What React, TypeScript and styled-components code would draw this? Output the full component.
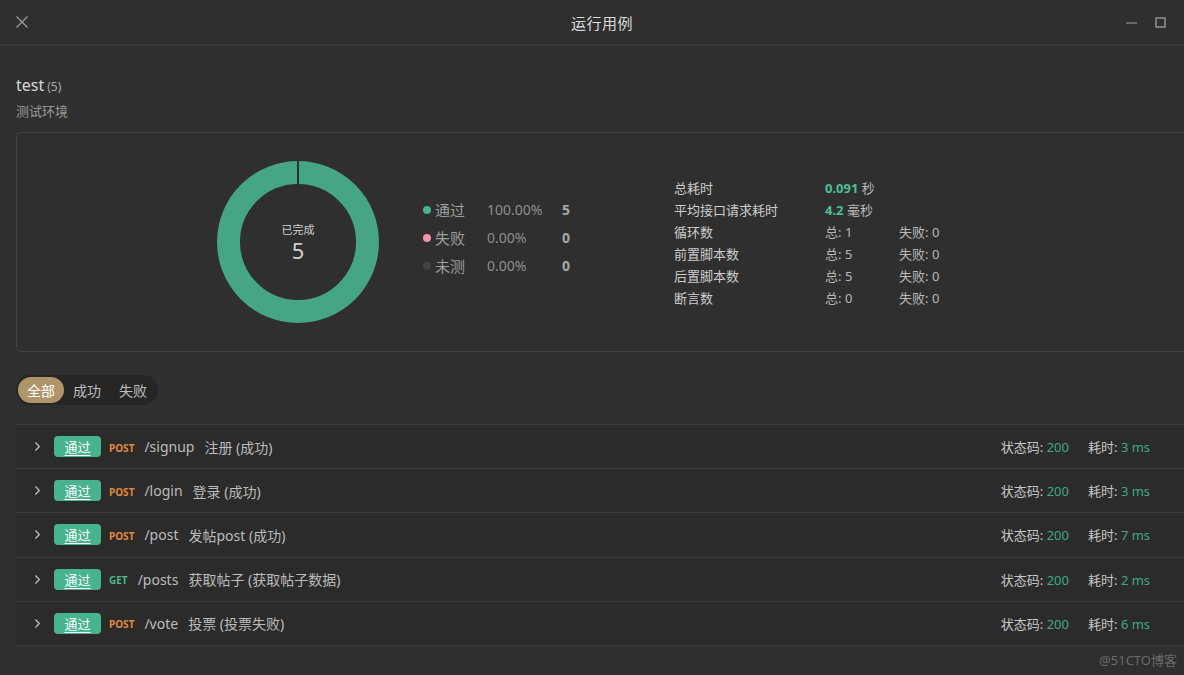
import React from 'react';
import styled, { createGlobalStyle } from 'styled-components';
import { ChevronRight } from 'lucide-react';

type CaseRow = {
  method: 'POST' | 'GET';
  path: string;
  name: string;
  code: number;
  ms: number;
};

const cases: CaseRow[] = [
  { method: 'POST', path: '/signup', name: '注册 (成功)', code: 200, ms: 3 },
  { method: 'POST', path: '/login', name: '登录 (成功)', code: 200, ms: 3 },
  { method: 'POST', path: '/post', name: '发帖post (成功)', code: 200, ms: 7 },
  { method: 'GET', path: '/posts', name: '获取帖子 (获取帖子数据)', code: 200, ms: 2 },
  { method: 'POST', path: '/vote', name: '投票 (投票失败)', code: 200, ms: 6 },
];

const legend = [
  { label: '通过', pct: '100.00%', count: 5, color: '#45b48e' },
  { label: '失败', pct: '0.00%', count: 0, color: '#f291aa' },
  { label: '未测', pct: '0.00%', count: 0, color: '#444444' },
];

const counters = [
  { label: '循环数', total: 1, fail: 0 },
  { label: '前置脚本数', total: 5, fail: 0 },
  { label: '后置脚本数', total: 5, fail: 0 },
  { label: '断言数', total: 0, fail: 0 },
];

const GlobalStyle = createGlobalStyle`
  html, body {
    margin: 0;
    padding: 0;
    background: #2f2f2f;
    overflow: hidden;
  }
  body {
    font-family: "Noto Sans", "Noto Sans CJK SC", sans-serif;
    color: #c8c8c8;
  }
`;

const App: React.FC = () => {
  return (
    <>
      <GlobalStyle />
      <Window>
        <TitleBar>
          <CloseButton>
            <svg width="14" height="14" viewBox="0 0 14 14">
              <path d="M1.5 1.5 L12.5 12.5 M12.5 1.5 L1.5 12.5" stroke="#9a9a9a" strokeWidth="1.3" />
            </svg>
          </CloseButton>
          <Title>运行用例</Title>
          <WindowControls>
            <svg width="11" height="11" viewBox="0 0 11 11">
              <path d="M0 6 H11" stroke="#a0a0a0" strokeWidth="1" />
            </svg>
            <svg width="11" height="11" viewBox="0 0 11 11">
              <rect x="1" y="1" width="9" height="9" fill="none" stroke="#a0a0a0" strokeWidth="1.3" />
            </svg>
            <svg width="11" height="11" viewBox="0 0 11 11">
              <path d="M1 1 L10 10 M10 1 L1 10" stroke="#a0a0a0" strokeWidth="1.2" />
            </svg>
          </WindowControls>
        </TitleBar>

        <Content>
          <SuiteName>
            test<SuiteCount>(5)</SuiteCount>
          </SuiteName>
          <EnvName>测试环境</EnvName>

          <SummaryCard>
            <Donut>
              <svg width="162" height="162" viewBox="0 0 162 162">
                <circle cx="81" cy="81" r="69.5" fill="none" stroke="#45a585" strokeWidth="23" />
                <path d="M81 0 V23" stroke="#2f2f2f" strokeWidth="2" />
              </svg>
              <DonutCenter>
                <DonutLabel>已完成</DonutLabel>
                <DonutValue>5</DonutValue>
              </DonutCenter>
            </Donut>

            <Legend>
              {legend.map((l) => (
                <LegendRow key={l.label}>
                  <Dot $color={l.color} />
                  <LegendLabel>{l.label}</LegendLabel>
                  <LegendPct>{l.pct}</LegendPct>
                  <LegendCount>{l.count}</LegendCount>
                </LegendRow>
              ))}
            </Legend>

            <Stats>
              <StatLabel>总耗时</StatLabel>
              <StatValue>
                <Green>0.091</Green> 秒
              </StatValue>
              <span />
              <StatLabel>平均接口请求耗时</StatLabel>
              <StatValue>
                <Green>4.2</Green> 毫秒
              </StatValue>
              <span />
              {counters.map((c) => (
                <React.Fragment key={c.label}>
                  <StatLabel>{c.label}</StatLabel>
                  <StatValue>总: {c.total}</StatValue>
                  <StatValue>失败: {c.fail}</StatValue>
                </React.Fragment>
              ))}
            </Stats>
          </SummaryCard>

          <Tabs>
            <Tab $active>全部</Tab>
            <Tab>成功</Tab>
            <Tab>失败</Tab>
          </Tabs>

          <CaseList>
            {cases.map((c) => (
              <CaseItem key={c.path}>
                <Chevron>
                  <ChevronRight size={15} strokeWidth={1.7} />
                </Chevron>
                <PassBadge>通过</PassBadge>
                <Method $method={c.method}>{c.method}</Method>
                <Path>{c.path}</Path>
                <CaseName>{c.name}</CaseName>
                <CaseMeta>
                  <MetaItem>
                    状态码: <MetaValue>{c.code}</MetaValue>
                  </MetaItem>
                  <MetaItem $wide>
                    耗时: <MetaValue>{c.ms} ms</MetaValue>
                  </MetaItem>
                </CaseMeta>
              </CaseItem>
            ))}
          </CaseList>
        </Content>
        <Watermark>@51CTO博客</Watermark>
      </Window>
    </>
  );
};

const Window = styled.div`
  position: relative;
  width: 1204px;
  height: 675px;
  background: #2f2f2f;
`;

const TitleBar = styled.div`
  position: relative;
  height: 44px;
  display: flex;
  align-items: center;
  justify-content: center;
  border-bottom: 2px solid #393939;
`;

const CloseButton = styled.div`
  position: absolute;
  left: 15px;
  top: 15px;
  display: flex;
`;

const Title = styled.div`
  font-size: 15px;
  color: #dcdcdc;
  letter-spacing: 0.5px;
`;

const WindowControls = styled.div`
  position: absolute;
  right: 9px;
  top: 17px;
  display: flex;
  gap: 18px;
`;

const Content = styled.div`
  padding: 28px 16px 0;
`;

const SuiteName = styled.div`
  font-size: 16px;
  line-height: 22px;
  color: #d6d6d6;
`;

const SuiteCount = styled.span`
  font-size: 12px;
  color: #aaa;
  margin-left: 3px;
`;

const EnvName = styled.div`
  margin-top: 3px;
  font-size: 13px;
  line-height: 20px;
  color: #9a9a9a;
`;

const SummaryCard = styled.div`
  margin-top: 11px;
  height: 218px;
  border: 1px solid #434343;
  border-radius: 5px;
  display: flex;
  align-items: center;
  padding-left: 200px;
`;

const Donut = styled.div`
  position: relative;
  width: 162px;
  height: 162px;
  margin-top: -1px;

  svg {
    display: block;
  }
`;

const DonutCenter = styled.div`
  position: absolute;
  inset: 0;
  display: flex;
  flex-direction: column;
  align-items: center;
  justify-content: center;
  padding-top: 2px;
`;

const DonutLabel = styled.div`
  font-size: 11px;
  color: #cfcfcf;
  line-height: 14px;
`;

const DonutValue = styled.div`
  font-size: 22px;
  line-height: 26px;
  color: #d0d0d0;
`;

const Legend = styled.div`
  margin-left: 44px;
  display: flex;
  flex-direction: column;
  gap: 6px;
  margin-top: -10px;
`;

const LegendRow = styled.div`
  display: flex;
  align-items: center;
  height: 22px;
  font-size: 14px;
`;

const Dot = styled.span<{ $color: string }>`
  width: 8px;
  height: 8px;
  border-radius: 50%;
  background: ${(p) => p.$color};
  margin-right: 4px;
  margin-top: 1px;
`;

const LegendLabel = styled.span`
  width: 52px;
  color: #9c9c9c;
  font-size: 15px;
`;

const LegendPct = styled.span`
  width: 75px;
  color: #8e8e8e;
`;

const LegendCount = styled.span`
  color: #a8a8a8;
  font-weight: 700;
`;

const Stats = styled.div`
  margin-left: 104px;
  display: grid;
  grid-template-columns: 151px 74px 60px;
  grid-auto-rows: 22px;
  align-items: center;
  font-size: 13px;
  margin-top: 0;
`;

const StatLabel = styled.span`
  color: #cdcdcd;
`;

const StatValue = styled.span`
  color: #b8b8b8;
  white-space: nowrap;
`;

const Green = styled.span`
  color: #4cc095;
  font-weight: 700;
`;

const Tabs = styled.div`
  margin-top: 23px;
  display: inline-flex;
  align-items: center;
  height: 30px;
  padding: 0 2px;
  background: #262626;
  border-radius: 15px;
`;

const Tab = styled.div<{ $active?: boolean }>`
  height: 26px;
  padding: 0 9px;
  display: flex;
  align-items: center;
  font-size: 14px;
  border-radius: 13px;
  color: ${(p) => (p.$active ? '#ffffff' : '#bdbdbd')};
  background: ${(p) => (p.$active ? '#b0956a' : 'transparent')};
`;

const CaseList = styled.div`
  margin-top: 19px;
  border-top: 1px solid #3a3a3a;
  width: 1188px;
`;

const CaseItem = styled.div`
  height: 43.2px;
  display: flex;
  align-items: center;
  padding-left: 14px;
  background: #2b2b2b;
  border-bottom: 1px solid #3a3a3a;
  font-size: 14px;
`;

const Chevron = styled.span`
  width: 15px;
  display: flex;
  color: #c8c8c8;
  margin-right: 9px;
`;

const PassBadge = styled.span`
  width: 47px;
  height: 21px;
  border-radius: 4px;
  background: #47b38f;
  color: #fff;
  font-size: 13px;
  display: flex;
  align-items: center;
  justify-content: center;
  text-decoration: underline;
  text-underline-offset: 3px;
`;

const Method = styled.span<{ $method: string }>`
  margin-left: 8px;
  font-size: 10px;
  font-weight: 700;
  color: ${(p) => (p.$method === 'GET' ? '#4cb88f' : '#e0893a')};
  margin-top: 2px;
`;

const Path = styled.span`
  margin-left: 10px;
  color: #bcbcbc;
`;

const CaseName = styled.span`
  margin-left: 10px;
  color: #bcbcbc;
`;

const CaseMeta = styled.div`
  margin-left: auto;
  display: flex;
  align-items: center;
  padding-right: 36px;
  font-size: 13px;
`;

const MetaItem = styled.span<{ $wide?: boolean }>`
  color: #c6c6c6;
  width: ${(p) => (p.$wide ? '80px' : 'auto')};
  margin-right: ${(p) => (p.$wide ? '0' : '19px')};
`;

const MetaValue = styled.span`
  color: #3fa886;
`;

const Watermark = styled.div`
  position: absolute;
  right: 27px;
  bottom: 6px;
  font-size: 13px;
  color: #6a6a6a;
`;

export default App;
